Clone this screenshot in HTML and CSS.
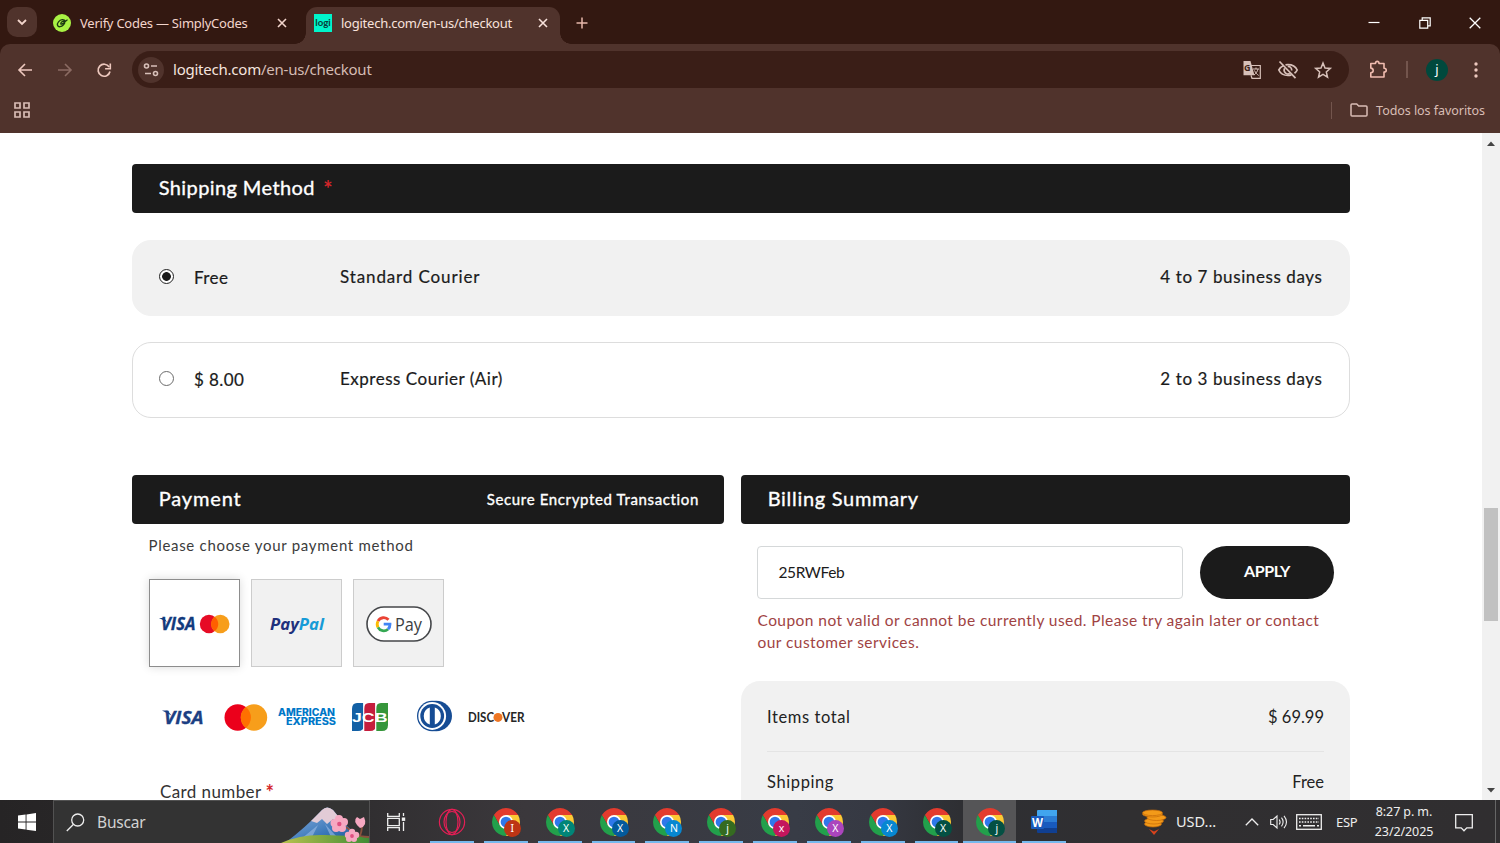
FILE: index.html
```html
<!DOCTYPE html>
<html lang="es">
<head>
<meta charset="utf-8">
<title>logitech.com/en-us/checkout</title>
<link rel="stylesheet" href="styles.css">
</head>
<body>
<svg class="defs" aria-hidden="true">
  <symbol id="chrome" viewBox="0 0 48 48">
    <path fill="#e33b2e" d="M3.22 12A24 24 0 0 1 44.78 12L24 12L13.6 30z"/>
    <path fill="#22a04b" d="M3.22 12A24 24 0 0 0 24 48L34.4 30L13.6 30z"/>
    <path fill="#fcc934" d="M44.78 12A24 24 0 0 1 24 48L34.4 30L24 12z"/>
    <circle cx="24" cy="24" r="12" fill="#fff"/>
    <circle cx="24" cy="24" r="9.2" fill="#2f78ea"/>
  </symbol>
  <symbol id="close" viewBox="0 0 12 12">
    <path d="M2 2l8 8M10 2l-8 8" fill="none" stroke="currentColor" stroke-width="1.6"/>
  </symbol>
</svg>

<div class="window">
  <header class="tabstrip">
    <div class="tab-search">
      <svg width="12" height="12" viewBox="0 0 12 12"><path d="M2 4l4 4 4-4" fill="none" stroke="currentColor" stroke-width="1.8"/></svg>
    </div>
    <div class="tab">
      <svg class="favicon" width="18" height="18" viewBox="0 0 18 18"><circle cx="9" cy="9" r="9" fill="#a9f244"/><path d="M12.6 7.4C11 4.800 7.500 5.300 5.500 7.800C3.500 10.300 4.400 13 7 12.700C9.600 12.400 12.200 9.400 11.700 7.900C11.200 6.500 8.200 7.600 7.800 9.300C7.500 10.800 9.600 10.400 14.500 5.600" fill="none" stroke="#1c3a12" stroke-width="1.3"/></svg>
      <span class="tab-title">Verify Codes — SimplyCodes</span>
      <svg class="tab-close" width="12" height="12"><use href="#close"/></svg>
    </div>
    <div class="tab active">
      <svg class="favicon" width="18" height="18" viewBox="0 0 18 18"><rect width="18" height="18" fill="#00f5cb"/><text x="1.300" y="11.500" class="logi" textLength="15.500" lengthAdjust="spacingAndGlyphs">logi</text></svg>
      <span class="tab-title">logitech.com/en-us/checkout</span>
      <svg class="tab-close" width="12" height="12"><use href="#close"/></svg>
    </div>
    <svg class="new-tab" width="12" height="12" viewBox="0 0 12 12"><path d="M6 .5v11M.5 6h11" stroke="currentColor" stroke-width="1.5"/></svg>
    <div class="win-controls">
      <svg width="12" height="12" viewBox="0 0 12 12"><path d="M.5 5.500h11" stroke="currentColor" stroke-width="1.200"/></svg>
      <svg width="12" height="12" viewBox="0 0 12 12"><path d="M.8 3.300h7.900v7.900H.8zM3.200 3.300V.8h8v8H8.700" fill="none" stroke="currentColor" stroke-width="1.200"/></svg>
      <svg width="12" height="12" viewBox="0 0 12 12"><path d="M.7.7l10.600 10.600M11.300.7L.7 11.300" stroke="currentColor" stroke-width="1.300"/></svg>
    </div>
  </header>

  <div class="chrome-body">
    <div class="toolbar">
      <div class="nav">
        <svg width="16" height="16" viewBox="0 0 16 16"><path d="M15 8H2.500M8 2L2 8l6 6" fill="none" stroke="currentColor" stroke-width="1.600"/></svg>
        <svg class="dim" width="16" height="16" viewBox="0 0 16 16"><path d="M1 8h12.500M8 2l6 6-6 6" fill="none" stroke="currentColor" stroke-width="1.600"/></svg>
        <svg width="16" height="16" viewBox="0 0 16 16"><path d="M13.200 5A6 6 0 1 0 14 9.500" fill="none" stroke="currentColor" stroke-width="1.700"/><path d="M14.300 1.500v5.200H9.100" fill="none" stroke="currentColor" stroke-width="1.600"/></svg>
      </div>
      <div class="omnibox">
        <div class="site-info">
          <svg width="16" height="16" viewBox="0 0 16 16"><g fill="none" stroke="currentColor" stroke-width="1.600"><circle cx="3.500" cy="4" r="2"/><path d="M8 4h6M2 11.500h6"/><circle cx="12.500" cy="11.500" r="2"/></g></svg>
        </div>
        <span class="url">logitech.com<i>/en-us/checkout</i></span>
        <div class="omni-icons">
          <svg width="20" height="20" viewBox="0 0 20 20"><path d="M9 5.500h9.300v12.800h-8.300l-1-3" fill="none" stroke="currentColor" stroke-width="1.200"/><path d="M1.500 1h7l4 14.300h-11z" fill="currentColor"/><text x="2" y="11" class="g-mark">G</text><path d="M11 9h6M14 7.500V9M16 9c-.5 2.500-2 4.500-4 6M12.500 10.500c1 2 2 3.500 4.200 5" fill="none" stroke="currentColor"/></svg>
          <svg width="22" height="20" viewBox="0 0 22 20"><g fill="none" stroke="currentColor" stroke-width="1.700"><path d="M6.700 5.600C4.300 6.700 2.600 8.400 1.800 10c1.500 3.300 5 5.500 9.200 5.500 1.200 0 2.400-.2 3.400-.6M8.500 4.900c.8-.2 1.600-.3 2.500-.3 4.200 0 7.700 2.200 9.200 5.400-.6 1.300-1.500 2.400-2.700 3.300"/><path d="M7.700 8.300a3.800 3.800 0 0 0 5.200 5.200M10.700 6.300a3.800 3.800 0 0 1 4 4.200"/><path d="M2.500 1.500l16 16.700"/></g></svg>
          <svg width="18" height="18" viewBox="0 0 18 18"><path d="M9 2l2 5 5.300.4-4 3.500 1.200 5.200L9 13.300l-4.500 2.800 1.200-5.200-4-3.500L7 7z" fill="none" stroke="currentColor" stroke-width="1.500"/></svg>
        </div>
      </div>
      <div class="tools">
        <svg class="puzzle" width="20" height="20" viewBox="0 0 20 20"><path d="M2.800 3.500h4.700C7.300.6 11.200.6 11 3.500h5v4.800c3 0 3 3.700 0 3.700v5H2.800v-4.300c3.200-.3 3.200-4.300 0-4.600z" fill="none" stroke="currentColor" stroke-width="1.600" stroke-linejoin="round"/></svg>
        <span class="sep"></span>
        <span class="profile">j</span>
        <svg width="4" height="16" viewBox="0 0 4 16"><g fill="currentColor"><circle cx="2" cy="2" r="1.700"/><circle cx="2" cy="8" r="1.700"/><circle cx="2" cy="14" r="1.700"/></g></svg>
      </div>
    </div>
    <div class="bookmarks">
      <svg width="16" height="16" viewBox="0 0 16 16"><path d="M1 1h5v5H1zM10 1h5v5h-5zM1 10h5v5H1zM10 10h5v5h-5z" fill="none" stroke="currentColor" stroke-width="1.700"/></svg>
      <div class="all-bookmarks">
        <span class="sep"></span>
        <svg width="18" height="14" viewBox="0 0 18 14"><path d="M1 11.700V2Q1 1 2 1h4.700l2 2H16q1 0 1 1v8q0 1-1 1H2q-1 0-1-1z" fill="none" stroke="currentColor" stroke-width="1.500"/></svg>
        <span>Todos los favoritos</span>
      </div>
    </div>
  </div>

  <div class="viewport">
    <main class="page">
      <h2 class="bar"><span class="t-method">Shipping Method</span><b class="req">*</b></h2>
      <div class="ship selected">
        <span class="radio on"></span><span class="price">Free</span><span class="courier standard">Standard Courier</span><span class="days">4 to 7 business days</span>
      </div>
      <div class="ship">
        <span class="radio"></span><span class="price">$ 8.00</span><span class="courier express">Express Courier (Air)</span><span class="days">2 to 3 business days</span>
      </div>

      <div class="columns">
        <section class="payment">
          <h2 class="bar"><span class="t-payment">Payment</span><small>Secure Encrypted Transaction</small></h2>
          <p class="choose">Please choose your payment method</p>
          <div class="methods">
            <div class="method current">
              <svg width="70" height="22" viewBox="0 0 70 22"><text x="2" y="17.300" class="visa" textLength="34.500" lengthAdjust="spacingAndGlyphs">VISA</text><path d="M0 5h5l3 4z" fill="#123a7d"/><circle cx="50" cy="11" r="9.200" fill="#e60b25"/><circle cx="61.300" cy="11" r="9.200" fill="#f79e1b"/><path d="M55.650 3.700a9.200 9.200 0 0 1 0 14.600a9.200 9.200 0 0 1 0-14.600z" fill="#ff5f00"/></svg>
            </div>
            <div class="method paypal-tile">
              <svg width="58" height="24" viewBox="0 0 58 24"><text x="3" y="17" class="paypal" textLength="54" lengthAdjust="spacingAndGlyphs"><tspan fill="#20307c">Pay</tspan><tspan fill="#179bd7">Pal</tspan></text></svg>
            </div>
            <div class="method">
              <svg class="gpay-logo" width="66" height="36" viewBox="0 0 66 36"><rect x="1" y="1" width="64" height="34" rx="17" fill="#fff" stroke="#45474a" stroke-width="1.600"/><g fill="none" stroke-width="2.800"><path d="M22.500 13.800A6.500 6.500 0 0 0 12 15.100" stroke="#ea4335"/><path d="M12 15.100a6.500 6.500 0 0 0 0 6.200" stroke="#fbbc04"/><path d="M12 21.300a6.500 6.500 0 0 0 10 1.900" stroke="#34a853"/><path d="M22 23.200a6.500 6.500 0 0 0 2-5H17.700" stroke="#4285f4"/></g><text x="29" y="24.500" class="gpay" textLength="27" lengthAdjust="spacingAndGlyphs">Pay</text></svg>
            </div>
          </div>
          <div class="brands">
            <svg width="42" height="32" viewBox="0 0 42 32"><text x="2" y="23" class="visa big" textLength="39.500" lengthAdjust="spacingAndGlyphs">VISA</text><path d="M0 9.600h5.500l4 5z" fill="#1c3f83"/></svg>
            <svg width="44" height="32" viewBox="0 0 44 32"><circle cx="13.700" cy="16.500" r="13.200" fill="#eb001b"/><circle cx="30" cy="16.500" r="13.200" fill="#f79e1b"/><path d="M21.850 6.100a13.200 13.200 0 0 1 0 20.800a13.200 13.200 0 0 1 0-20.800z" fill="#ff7000"/></svg>
            <svg width="58" height="32" viewBox="0 0 58 32"><text x="-1" y="15.200" class="amex" textLength="57" lengthAdjust="spacingAndGlyphs">AMERICAN</text><text x="7" y="23.900" class="amex" textLength="50" lengthAdjust="spacingAndGlyphs">EXPRESS</text></svg>
            <svg width="38" height="32" viewBox="0 0 38 32"><path d="M6 2h7v22q0 6-6 6H1V8q0-6 5-6z" fill="#1260a5"/><path d="M18 2h7v22q0 6-6 6h-6V8q0-6 5-6z" fill="#c51d3d"/><path d="M30 2h7v22q0 6-6 6h-6V8q0-6 5-6z" fill="#36963b"/><path d="M12.700 2v28M24.700 2v28" stroke="#fff" stroke-width="1.200"/><text x="1" y="20.600" class="jcb" textLength="35.500" lengthAdjust="spacingAndGlyphs">JCB</text></svg>
            <svg width="36" height="32" viewBox="0 0 36 32"><ellipse cx="20" cy="15" rx="16" ry="15.200" fill="#164c94"/><circle cx="16.200" cy="15" r="15.200" fill="#164c94"/><circle cx="16.200" cy="15" r="13.900" fill="#fff"/><circle cx="16.200" cy="15" r="11.900" fill="#164c94"/><path d="M13.800 6.500v17a9 9 0 0 1 0-17zM18.800 6.500v17a9 9 0 0 0 0-17z" fill="#fff"/></svg>
            <svg width="58" height="32" viewBox="0 0 58 32"><text x="0" y="20.800" class="discover" textLength="26" lengthAdjust="spacingAndGlyphs">DISC</text><circle cx="30" cy="16.400" r="4.500" fill="#ee7624"/><text x="34" y="20.800" class="discover" textLength="22.500" lengthAdjust="spacingAndGlyphs">VER</text></svg>
          </div>
          <p class="field-label"><span>Card number</span><b class="req">*</b></p>
        </section>

        <section class="billing">
          <h2 class="bar"><span class="t-billing">Billing Summary</span></h2>
          <div class="coupon">
            <div class="coupon-input"><span>25RWFeb</span></div>
            <div class="apply"><span>APPLY</span></div>
          </div>
          <p class="error"><span>Coupon not valid or cannot be currently used. Please try again later or contact</span><br><span>our customer services.</span></p>
          <div class="totals">
            <div class="line first"><span class="name">Items total</span><span>$ 69.99</span></div>
            <div class="line"><span class="name">Shipping</span><span>Free</span></div>
          </div>
        </section>
      </div>
    </main>
    <div class="scrollbar">
      <svg width="10" height="5" viewBox="0 0 10 5"><path d="M1 5l4-4.500L9 5z" fill="#444"/></svg>
      <span class="thumb"></span>
      <svg width="10" height="5" viewBox="0 0 10 5"><path d="M1 0l4 4.500L9 0z" fill="#444"/></svg>
    </div>
  </div>

  <footer class="taskbar">
    <div class="start"><svg width="18" height="18" viewBox="0 0 18 18"><path d="M0 2.600l7.600-1v7H0zM8.500 1.400L18 0v8.600H8.500zM0 9.500h7.600v7L0 15.500zM8.500 9.500H18V18l-9.500-1.300z" fill="#fff"/></svg></div>
    <div class="search">
      <svg width="19" height="19" viewBox="0 0 19 19"><g fill="none" stroke="#eee" stroke-width="1.300"><circle cx="11.700" cy="7" r="6"/><path d="M7.500 11.200L.8 18"/></g></svg>
      <span>Buscar</span>
      <svg class="scene" width="88" height="37" viewBox="0 0 88 37">
        <defs>
          <linearGradient id="fuji" x2="1" y2="1"><stop offset="0" stop-color="#9ab9e5"/><stop offset=".6" stop-color="#3a78b9"/><stop offset="1" stop-color="#1c4d91"/></linearGradient>
          <linearGradient id="meadow"><stop offset="0" stop-color="#b9c24e"/><stop offset="1" stop-color="#3f8d35"/></linearGradient>
        </defs>
        <path d="M4 37Q24 22 41 4q5-5 11 0Q64 20 84 35z" fill="url(#fuji)"/>
        <path d="M30 15L41 4q5-5 11 0l9 11-5 1-4-3-6 5-5-5-5 4z" fill="#e2cbd6"/>
        <path d="M20 33l17-14-7 14zM50 31l-6-13 12 13z" fill="#9cbde6" opacity=".6"/>
        <path d="M0 37q20-9 44-8t44 1v7z" fill="url(#meadow)"/>
        <path d="M88 31q-9 0-15-4l-8-6M79 30q3-8 1-13" fill="none" stroke="#89513d" stroke-width="1.800"/>
        <g fill="#f6a8c1"><circle cx="58" cy="13" r="4"/><circle cx="53.500" cy="17" r="4"/><circle cx="55" cy="22" r="4"/><circle cx="61" cy="22" r="4"/><circle cx="63" cy="16" r="4"/><circle cx="71" cy="26" r="3.200"/><circle cx="67" cy="29" r="3.200"/><circle cx="68" cy="33" r="3"/><circle cx="73" cy="33" r="3"/><circle cx="75" cy="29" r="3.200"/><path d="M79 22q-8-7-3-11l3 2 4-2q4 9-4 11z"/></g>
        <circle cx="58.300" cy="18" r="2.200" fill="#df4f80"/><circle cx="71" cy="30" r="1.900" fill="#df4f80"/>
      </svg>
    </div>
    <div class="taskview"><svg width="19" height="18" viewBox="0 0 19 18"><path d="M.7 0v3.300h11.600V0M.7 18v-3.300h11.600V18M.7 5.300h11.600v7.400H.7zM16.500 0v3M16.500 9v9" fill="none" stroke="#eee" stroke-width="1.300"/><path d="M14.800 4.500h3.400v3.400h-3.400z" fill="#eee"/></svg></div>
    <div class="apps">
      <div class="app"><svg width="28" height="28" viewBox="0 0 28 28"><g fill="none" stroke="#e31f55" stroke-width="1.200"><circle cx="14" cy="14" r="12.600"/><ellipse cx="14" cy="14" rx="6" ry="12.600"/><ellipse cx="14" cy="14" rx="8" ry="10.500"/></g></svg></div>
      <div class="app"><svg width="28" height="28"><use href="#chrome"/></svg><span class="badge b-rust">I</span></div>
      <div class="app"><svg width="28" height="28"><use href="#chrome"/></svg><span class="badge b-teal">X</span></div>
      <div class="app"><svg width="28" height="28"><use href="#chrome"/></svg><span class="badge b-navy">X</span></div>
      <div class="app"><svg width="28" height="28"><use href="#chrome"/></svg><span class="badge b-sky">N</span></div>
      <div class="app"><svg width="28" height="28"><use href="#chrome"/></svg><span class="badge b-olive">j</span></div>
      <div class="app"><svg width="28" height="28"><use href="#chrome"/></svg><span class="badge b-pink">x</span></div>
      <div class="app"><svg width="28" height="28"><use href="#chrome"/></svg><span class="badge b-violet">X</span></div>
      <div class="app"><svg width="28" height="28"><use href="#chrome"/></svg><span class="badge b-sky">X</span></div>
      <div class="app"><svg width="28" height="28"><use href="#chrome"/></svg><span class="badge b-pine">X</span></div>
      <div class="app focused"><svg width="28" height="28"><use href="#chrome"/></svg><span class="badge b-pine">j</span></div>
      <div class="app word-app"><svg width="28" height="26" viewBox="0 0 28 26"><path fill="#41a5ee" d="M7 2q0-1 1-1h19v6H7z"/><path fill="#2b7cd3" d="M7 7h20v6H7z"/><path fill="#185abd" d="M7 13h20v6H7z"/><path fill="#103f91" d="M7 19h20v5H8q-1 0-1-1z"/><rect x="1" y="7" width="13" height="13" rx="1" fill="#185abd"/><text x="2" y="17.500" class="word" textLength="11" lengthAdjust="spacingAndGlyphs">W</text></svg></div>
    </div>
    <div class="tray">
      <svg class="coins" width="26" height="26" viewBox="0 0 26 26"><g fill="#f39a19" stroke="#c46a08" stroke-width=".7"><ellipse cx="12" cy="15" rx="8.500" ry="3"/><ellipse cx="13" cy="12" rx="9.500" ry="3"/><ellipse cx="15.500" cy="8.500" rx="9.500" ry="3"/><ellipse cx="11.500" cy="5" rx="10" ry="3"/><ellipse cx="11.500" cy="3.800" rx="10" ry="2.800"/></g><path d="M8 20l5 2.500 5-2.500-5 6z" fill="#d9431d"/></svg>
      <span class="t-usd">USD...</span>
      <svg class="chev" width="14" height="8" viewBox="0 0 14 8"><path d="M.8 7.200L7 1l6.200 6.200" fill="none" stroke="#eee" stroke-width="1.300"/></svg>
      <svg class="vol" width="18" height="16" viewBox="0 0 18 16"><g fill="none" stroke="#eee" stroke-width="1.100"><path d="M.7 5.500h2.500L7 2v12l-3.800-3.500H.7zM9.200 5.500q1.800 2.500 0 5M11.500 3.700q3.200 4.300 0 8.600M14 1.800q5 6.200 0 12.400"/></g></svg>
      <svg class="kbd" width="26" height="16" viewBox="0 0 26 16"><rect x=".7" y=".7" width="24.600" height="14.600" fill="none" stroke="#eee" stroke-width="1.300"/><g stroke="#eee" stroke-width="1.500"><path d="M3 4.500h20M3 8h20" stroke-dasharray="1.600 1.200"/><path d="M3 11.700h2M7 11.700h12M21 11.700h2"/></g></svg>
      <span class="t-esp">ESP</span>
      <div class="clock"><span>8:27 p. m.</span><span>23/2/2025</span></div>
      <svg class="notif" width="18" height="18" viewBox="0 0 18 18"><path d="M.7.700h16.600v13.100h-5.500L9 16.800l-2.800-3H.7z" fill="none" stroke="#eee" stroke-width="1.300"/></svg>
      <span class="peek"></span>
    </div>
  </footer>
</div>
</body>
</html>
```
FILE: styles.css
```css
* { box-sizing: border-box; }
body { margin: 0; font-family: "Noto Sans", "Open Sans", sans-serif; }
svg { display: block; flex: none; overflow: visible; }
h2, p { margin: 0; font-weight: 400; }
.defs { display: none; }
.window { width: 1500px; height: 843px; display: flex; flex-direction: column; overflow: hidden; background: #fff; }
.window span { white-space: nowrap; }

/* tab strip */
.tabstrip { height: 44px; flex: none; display: flex; background: #331811; color: #f3d5cc; }
.tab-search { width: 30px; height: 30px; margin: 7px 0 0 7px; border-radius: 10px; background: #50332c; display: flex; align-items: center; justify-content: center; }
.tab { width: 254px; margin: 7px 0 0 7px; padding: 0 11px 6px 9px; display: flex; align-items: center; font-size: 13px; letter-spacing: -.24px; }
.tab:not(.active) { width: 255px; }
.tab.active { position: relative; background: #50332c; border-radius: 11px 11px 0 0; color: #f8e2dc; padding-left: 8px; }
.tab.active::before, .tab.active::after { content: ""; position: absolute; bottom: 0; width: 11px; height: 11px; }
.tab.active::before { left: -11px; background: radial-gradient(circle at 0 0, transparent 10.500px, #50332c 11px); }
.tab.active::after { right: -11px; background: radial-gradient(circle at 100% 0, transparent 10.500px, #50332c 11px); }
.favicon { margin-right: 9px; }
.logi { font: 700 8.500px Lato, sans-serif; letter-spacing: 0; fill: #073f3a; }
.tab-title { flex: 1; }
.new-tab { margin: 16.500px 0 0 16px; color: #e7b7ab; }
.win-controls { margin: 16.500px 19px 0 auto; display: flex; gap: 38.500px; color: #fff; }

/* toolbar */
.chrome-body { height: 89px; flex: none; display: flex; flex-direction: column; background: linear-gradient(#331811, #331811) 0 0/100% 12px no-repeat; }
.toolbar { height: 51px; display: flex; align-items: center; padding: 0 22px 0 17px; background: #50332c; border-radius: 10px 10px 0 0; color: #edc8be; }
.nav { display: flex; gap: 23.500px; width: 115px; }
.dim { color: #8b6b63; }
.omnibox { width: 1217px; height: 37px; border-radius: 19px; background: #3a1e17; display: flex; align-items: center; padding: 0 17px 0 6px; color: #d7c0b9; }
.site-info { width: 26px; height: 26px; border-radius: 50%; background: #50332c; display: flex; align-items: center; justify-content: center; margin-right: 9px; }
.url { font-size: 15px; line-height: 20px; margin-top: -2px; letter-spacing: -.23px; color: #f5e4df; }
.url i { font-style: normal; color: #d5bcb4; }
.omni-icons { margin-left: auto; display: flex; align-items: center; gap: 15px; }
.g-mark { font: 700 9px "Open Sans", sans-serif; fill: #3a1e17; }
.tools { margin-left: auto; display: flex; align-items: center; }
.puzzle { margin-right: 18px; color: #f0bcb0; }
.sep { width: 1.500px; height: 17px; background: #73554d; }
.profile { width: 22px; height: 22px; margin: 0 26px 0 18.500px; border-radius: 50%; background: #00493d; color: #fff; font-size: 13px; line-height: 21px; text-align: center; }
.bookmarks { flex: 1; display: flex; align-items: center; padding: 0 15px 8px 14px; background: #50332c; color: #d9bdb5; }
.all-bookmarks { margin-left: auto; display: flex; align-items: center; font-size: 12.500px; letter-spacing: -.05px; }
.all-bookmarks svg { margin: 0 8px 0 18px; }

/* page */
.viewport { height: 667px; flex: none; display: flex; overflow: hidden; }
.page { flex: 1; padding: 31px 132px 0 132px; font-family: Lato, sans-serif; color: #1b1b1b; font-size: 17px; }
.bar { height: 49px; padding: 0 26px 0 26.700px; border-radius: 4px; background: #1b1b1b; color: #fff; font-size: 20px; line-height: 46px; display: flex; -webkit-text-stroke: .35px #fff; }
.bar small { margin: 0 -1px 0 auto; font-size: 15px; line-height: 49px; letter-spacing: .64px; }
.t-method { letter-spacing: .4px; }
.t-payment { letter-spacing: .85px; }
.t-billing { letter-spacing: .7px; }
.req { color: #d4262a; font-weight: 700; margin-left: 8.500px; -webkit-text-stroke: 0; }
.bar .req { font-size: 22px; line-height: 50px; }
.ship { height: 76px; margin-top: 26px; padding: 0 26.500px 2px 26px; border: 1px solid #ddd; border-radius: 19px; display: flex; align-items: center; -webkit-text-stroke: .2px #1b1b1b; }
.ship.selected { margin-top: 27px; background: #f1f1f1; border-color: #f1f1f1; }
.radio { width: 15px; height: 15px; border: 1px solid #6b6b6b; border-radius: 50%; background: #fff; margin: -2px 20px 0 0; }
.radio.on { border: 1.500px solid #222; background: radial-gradient(circle, #1b1b1b 4px, #fff 4.700px); }
.price { width: 146px; letter-spacing: .4px; }
.courier, .days { position: relative; top: -1px; }
.standard { letter-spacing: .88px; }
.express { letter-spacing: .52px; }
.days { margin-left: auto; letter-spacing: .6px; }
.columns { display: flex; gap: 17px; margin-top: 57px; }
.payment { width: 592px; flex: none; }
.billing { width: 609px; flex: none; }
.choose { margin: 10px 0 0 16.500px; font-size: 15px; line-height: 22px; letter-spacing: .7px; color: #3c3c3c; }
.methods { display: flex; gap: 11px; margin: 23px 0 0 16.500px; }
.method { width: 91px; height: 88px; border: 1px solid #ccc; background: #f1f1f1; display: flex; align-items: center; justify-content: center; padding-top: 1px; }
.method.current { background: #fff; border-color: #8d8d8d; box-shadow: 0 0 9px rgba(0, 0, 0, .15); padding-top: 2px; }
.method.paypal-tile { padding-top: 3px; }
.gpay-logo { margin-left: 1px; }
.visa { font: italic 700 17px "Open Sans", sans-serif; fill: #123a7d; stroke: #123a7d; stroke-width: .3px; }
.visa.big { font-size: 18.500px; fill: #1c3f83; stroke: #1c3f83; }
.paypal { font: italic 700 16.500px "Open Sans", sans-serif; }
.gpay { font: 400 18.500px "Open Sans", sans-serif; fill: #3c4043; }
.amex { font: 800 9.800px Inter, sans-serif; fill: #0077c8; }
.jcb { font: 700 12px "Liberation Sans", sans-serif; fill: #fff; }
.discover { font: 700 12.500px Lato, sans-serif; fill: #252525; }
.brands { display: flex; align-items: center; margin: 34px 0 0 30px; height: 32px; gap: 20px; }
.brands svg:nth-child(2) { margin-right: -9.500px; }
.brands svg:nth-child(3) { margin-right: -6px; }
.brands svg:nth-child(4) { margin-right: 7.500px; }
.brands svg:nth-child(5) { margin-right: -4px; }
.field-label { margin: 48px 0 0 28px; line-height: 22px; display: flex; font-size: 17px; letter-spacing: .4px; color: #333; }
.field-label .req { margin-left: 4px; font-size: 20px; }
.coupon { display: flex; gap: 17px; margin: 22px 0 0 16px; }
.coupon-input { width: 426px; height: 53px; border: 1px solid #d5d8d9; border-radius: 4px; padding-left: 20.500px; font-size: 15.500px; line-height: 51px; letter-spacing: -.4px; }
.apply { width: 134px; height: 53px; border-radius: 27px; background: #1b1b1b; color: #fff; font-weight: 700; font-size: 16px; line-height: 50px; letter-spacing: -.4px; text-align: center; }
.error { margin: 10px 0 0 16.500px; color: #a04343; font-size: 15.500px; line-height: 22px; letter-spacing: .44px; }
.totals { margin-top: 28px; height: 160px; background: #f1f1f1; border-radius: 19px 19px 0 0; padding: 0 26px; color: #222; font-size: 16.500px; }
.line { display: flex; justify-content: space-between; line-height: 61px; }
.line.first { line-height: 73px; height: 71px; border-bottom: 1.500px solid #e4e4e4; }
.name { letter-spacing: .6px; }

/* scrollbar */
.scrollbar { width: 18px; flex: none; background: #f1f1f1; display: flex; flex-direction: column; align-items: center; padding: 8px 0 7px; }
.thumb { width: 14px; height: 113px; background: #c1c1c1; margin: 362px 0 auto; }

/* taskbar */
.taskbar { height: 43px; flex: none; display: flex; background: linear-gradient(90deg, #262425, #302e30 24%, #3b383c 35%, #383c46 53%, #363943 58%, #2e2f33 64%, #302f31 75%, #302e30); color: #eee; }
.start { width: 53px; display: flex; align-items: center; justify-content: center; }
.search { width: 317px; background: #333; border: 1px solid #525252; border-bottom: 0; display: flex; align-items: center; padding-left: 12px; font-size: 15.500px; letter-spacing: -.2px; color: #d2d2d2; }
.search span { margin-left: 12px; }
.scene { margin-left: auto; align-self: flex-end; overflow: hidden; }
.taskview { width: 55px; display: flex; align-items: center; padding-left: 17px; }
.apps { display: flex; }
.app { position: relative; width: 53.850px; height: 43px; padding: 8px 0 0 13px; display: flex; align-items: flex-start; }
.app::after { content: ""; position: absolute; left: 5px; right: 5px; bottom: 0; height: 2px; background: #76b9ed; }
.app.focused { background: #555557; margin-right: 1px; width: 52.850px; }
.app.focused::after { left: 0; right: 0; }
.word-app { padding: 9px 0 0 12.500px; }
.badge { position: absolute; left: 25px; top: 20px; width: 17px; height: 17px; border-radius: 50%; font-size: 10.500px; line-height: 17px; text-align: center; color: #fff; }
.b-rust { background: #bd3515; } .b-teal { background: #008577; } .b-navy { background: #045a9c; }
.b-sky { background: #0787d1; } .b-olive { background: #356b20; } .b-pink { background: #c4165d; }
.b-violet { background: #ab45bd; } .b-pine { background: #045043; }
.word { font: 700 11.500px "Open Sans", sans-serif; fill: #fff; }
.tray { margin-left: auto; width: 359px; display: flex; align-items: center; }
.t-usd { width: 41px; margin: -2px 28px 0 9px; font-size: 14.500px; }
.vol { margin: 0 8px 0 11px; }
.t-esp { width: 20px; margin: 0 19px 0 14px; font-size: 13px; letter-spacing: -.3px; }
.clock { width: 58px; display: flex; flex-direction: column; align-items: center; font-size: 12.500px; line-height: 19.500px; letter-spacing: -.1px; }
.notif { margin: 2px 22px 0 22px; }
.peek { width: 1px; height: 43px; background: #666; }
```
